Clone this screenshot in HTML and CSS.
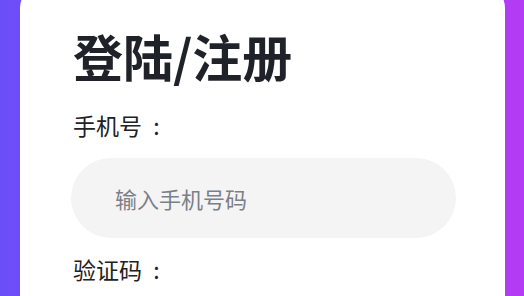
FILE: index.html
```html
<!DOCTYPE html>
<html lang="zh-CN">
<head>
  <meta charset="UTF-8" />
  <meta name="viewport" content="width=device-width, initial-scale=1.0"/>
  <title>登陆/注册</title>
  <link rel="stylesheet" href="styles.css">
</head>
<body>
  <div class="page">
    <div class="login-card">
      <h1 class="title">登陆/注册</h1>
      <div class="field-label">手机号 :</div>
      <input type="text" class="field-input" placeholder="输入手机号码">
      <div class="field-label second">验证码 :</div>
    </div>
  </div>
</body>
</html>
```

FILE: styles.css
```css
* {
  box-sizing: border-box;
}

html, body {
  margin: 0;
  padding: 0;
  height: 100%;
}

body {
  font-family: "Noto Sans CJK SC", "Noto Sans", sans-serif;
  background: linear-gradient(to right, #6b4ef8, #b53bf4);
  overflow: hidden;
}

.page {
  height: 100%;
  display: flex;
  flex-direction: column;
  padding: 0 19px 0 20px;
  overflow: hidden;
}

.login-card {
  flex-shrink: 0;
  margin-top: -16px;
  background: #ffffff;
  border-radius: 24px;
  padding: 38px 49px 40px 51px;
}

.title {
  margin: 0;
  font-size: 50px;
  line-height: 66px;
  font-weight: 700;
  color: #1f2329;
  padding-left: 2px;
}

.field-label {
  margin-top: 22px;
  font-size: 23px;
  line-height: 30px;
  color: #222222;
  padding-left: 2px;
  word-spacing: 6px;
}

.field-label.second {
  margin-top: 16px;
}

.field-input {
  display: block;
  width: 100%;
  height: 80px;
  margin-top: 18px;
  border: none;
  outline: none;
  border-radius: 40px;
  background: #f4f4f5;
  padding: 0 44px;
  font-family: inherit;
  font-size: 22px;
  color: #222;
}

.field-input::placeholder {
  color: #7b7f86;
}
```
